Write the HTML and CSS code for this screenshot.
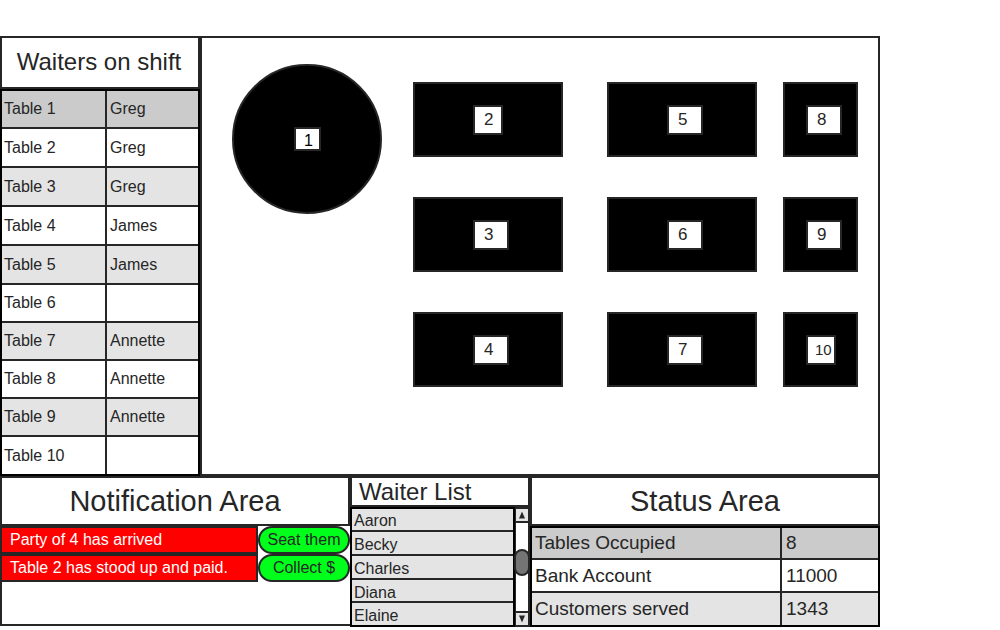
FILE: index.html
```html
<!DOCTYPE html>
<html lang="en">
<head>
<meta charset="utf-8">
<title>Restaurant floor</title>
<link rel="stylesheet" href="styles.css">
</head>
<body>
<main class="app">
  <div class="upper">
    <section class="shift">
      <h2 class="heading heading-shift">Waiters on shift</h2>
      <table class="grid shift-table" aria-label="Waiters on shift">
        <tbody>
          <tr><td>Table 1</td><td>Greg</td></tr>
          <tr><td>Table 2</td><td>Greg</td></tr>
          <tr><td>Table 3</td><td>Greg</td></tr>
          <tr><td>Table 4</td><td>James</td></tr>
          <tr><td>Table 5</td><td>James</td></tr>
          <tr><td>Table 6</td><td></td></tr>
          <tr><td>Table 7</td><td>Annette</td></tr>
          <tr><td>Table 8</td><td>Annette</td></tr>
          <tr><td>Table 9</td><td>Annette</td></tr>
          <tr><td>Table 10</td><td></td></tr>
        </tbody>
      </table>
    </section>
    <section class="floor" aria-label="Floor plan">
      <div class="seat round t1"><span class="tag tag-round">1</span></div>
      <div class="seat wide t2"><span class="tag tag-small">2</span></div>
      <div class="seat wide t3"><span class="tag">3</span></div>
      <div class="seat wide t4"><span class="tag">4</span></div>
      <div class="seat wide t5"><span class="tag">5</span></div>
      <div class="seat wide t6"><span class="tag">6</span></div>
      <div class="seat wide t7"><span class="tag">7</span></div>
      <div class="seat square t8"><span class="tag">8</span></div>
      <div class="seat square t9"><span class="tag">9</span></div>
      <div class="seat square t10"><span class="tag tag-small tag-ten">10</span></div>
    </section>
  </div>
  <div class="lower">
    <section class="notifications">
      <h2 class="heading heading-large">Notification Area</h2>
      <div class="notice"><p class="message">Party of 4 has arrived</p><button class="action" type="button">Seat them</button></div>
      <div class="notice"><p class="message">Table 2 has stood up and paid.</p><button class="action" type="button">Collect $</button></div>
    </section>
    <section class="waiters">
      <h2 class="heading heading-list">Waiter List</h2>
      <div class="list-box">
        <ul class="list">
          <li>Aaron</li>
          <li>Becky</li>
          <li>Charles</li>
          <li>Diana</li>
          <li>Elaine</li>
        </ul>
        <div class="scrollbar">
          <button class="arrow arrow-up" type="button" aria-label="Scroll up"><svg width="8" height="8" viewBox="0 0 8 8"><path d="M4 0.5 7 7.5H1Z" fill="#262626"/></svg></button>
          <div class="track"><div class="thumb"></div></div>
          <button class="arrow arrow-down" type="button" aria-label="Scroll down"><svg width="8" height="8" viewBox="0 0 8 8"><path d="M1 0.5H7L4 7.5Z" fill="#262626"/></svg></button>
        </div>
      </div>
    </section>
    <section class="status">
      <h2 class="heading heading-large">Status Area</h2>
      <table class="grid status-table" aria-label="Status">
        <tbody>
          <tr><td>Tables Occupied</td><td>8</td></tr>
          <tr><td>Bank Account</td><td>11000</td></tr>
          <tr><td>Customers served</td><td>1343</td></tr>
        </tbody>
      </table>
    </section>
  </div>
</main>
</body>
</html>
```
FILE: styles.css
```css
* {
  box-sizing: border-box;
}

body {
  margin: 0;
  padding-top: 36px;
  background: #fff;
  color: #262626;
  font-family: "Liberation Sans", Arial, sans-serif;
  font-size: 16px;
}

.app {
  width: 88%;
  min-width: 880px;
}

.upper {
  display: grid;
  grid-template-columns: 200px 1fr;
}

.lower {
  display: grid;
  grid-template-columns: 350px 180px 1fr;
  align-items: start;
}

.heading {
  margin: 0;
  border: 2px solid #262626;
  font-weight: normal;
  text-align: center;
}

.heading-shift {
  padding: 0 2px 1px 0;
  font-size: 24px;
  line-height: 48px;
}

.heading-large {
  font-size: 29px;
  line-height: 46px;
}

.heading-list {
  padding-left: 7px;
  font-size: 24px;
  line-height: 27px;
  text-align: left;
}

.grid {
  width: 100%;
  border: 2px solid #000;
  border-spacing: 0;
  table-layout: fixed;
}

.grid td {
  padding: 0 3px;
  border-bottom: 2px solid #262626;
}

.grid td:first-child {
  padding-left: 2px;
  border-right: 2px solid #262626;
}

.grid tr:last-child td {
  border-bottom: 0;
}

.grid tr:nth-child(odd) {
  background: #e4e4e4;
}

.grid tr:first-child {
  background: #cbcbcb;
}

.shift-table tr {
  height: 38px;
}

.shift-table tr:nth-child(n+2):nth-child(-n+5) {
  height: 39px;
}

.shift-table tr:last-child {
  height: 37px;
}

.shift-table td:first-child {
  width: 105px;
}

.floor {
  position: relative;
  border: 2px solid #262626;
}

.seat {
  position: absolute;
  display: flex;
  align-items: flex-start;
  height: 75px;
  border: 2px solid #262626;
  background: #000;
}

.round {
  width: 150px;
  height: 150px;
  padding: 61px 0 0 60px;
  border-radius: 50%;
}

.wide {
  width: 150px;
  padding: 21px 0 0 58px;
}

.square {
  width: 75px;
  padding: 21px 0 0 21px;
}

.t1 { left: 30px; top: 26px; }
.t2 { left: 211px; top: 44px; }
.t3 { left: 211px; top: 159px; }
.t4 { left: 211px; top: 274px; }
.t5 { left: 405px; top: 44px; }
.t6 { left: 405px; top: 159px; }
.t7 { left: 405px; top: 274px; }
.t8 { left: 581px; top: 44px; }
.t9 { left: 581px; top: 159px; }
.t10 { left: 581px; top: 274px; }

.tag {
  width: 36px;
  height: 30px;
  padding-left: 9px;
  border: 2px solid #262626;
  background: #fff;
  font-size: 17px;
  line-height: 26px;
}

.tag-small {
  width: 30px;
}

.tag-ten {
  padding-left: 7px;
  font-size: 15px;
}

.tag-round {
  width: 27px;
  height: 24px;
  padding-left: 8px;
  color: #000;
  font-size: 16px;
  line-height: 24px;
}

.notifications {
  min-height: 150px;
  border-left: 2px solid #262626;
  border-bottom: 2px solid #262626;
}

.notifications .heading {
  border-left: 0;
}

.notice {
  display: grid;
  grid-template-columns: 1fr 92px;
}

.message {
  margin: 0;
  padding-left: 8px;
  border: 2px solid #262626;
  border-left: 0;
  background: #f00;
  color: #fff;
  line-height: 24px;
}

.action {
  padding: 0;
  border: 2px solid #262626;
  border-radius: 14px;
  background: #00ff1a;
  color: #262626;
  font: inherit;
}

.list-box {
  display: grid;
  grid-template-columns: 1fr 15px;
}

.list {
  margin: 0;
  padding: 0;
  border: 2px solid #000;
  background: #e4e4e4;
  list-style: none;
}

.list li {
  height: 24px;
  padding-left: 2px;
  border-bottom: 2px solid #262626;
  line-height: 26px;
}

.list li:first-child {
  height: 23px;
  line-height: 24px;
}

.list li:nth-child(4) {
  height: 23px;
}

.list li:last-child {
  height: 22px;
  border-bottom: 0;
}

.scrollbar {
  display: flex;
  flex-direction: column;
  border: solid #262626;
  border-width: 2px 2px 2px 1px;
}

.arrow {
  display: flex;
  align-items: center;
  justify-content: center;
  height: 14px;
  padding: 0;
  border: 0 solid #262626;
  background: #e4e4e4;
}

.arrow-up {
  border-bottom-width: 2px;
}

.arrow-down {
  border-top-width: 2px;
}

.track {
  flex: 1;
  padding-top: 26px;
}

.thumb {
  height: 27px;
  margin: 0 -2px;
  border: 2px solid #262626;
  border-radius: 8px;
  background: #747474;
}

.status-table {
  font-size: 19px;
}

.status-table tr {
  height: 33px;
}

.status-table tr:first-child,
.status-table tr:last-child {
  height: 32px;
}

.status-table td:first-child {
  width: 250px;
  padding-left: 3px;
}

.status-table td:last-child {
  padding-left: 4px;
}
```
